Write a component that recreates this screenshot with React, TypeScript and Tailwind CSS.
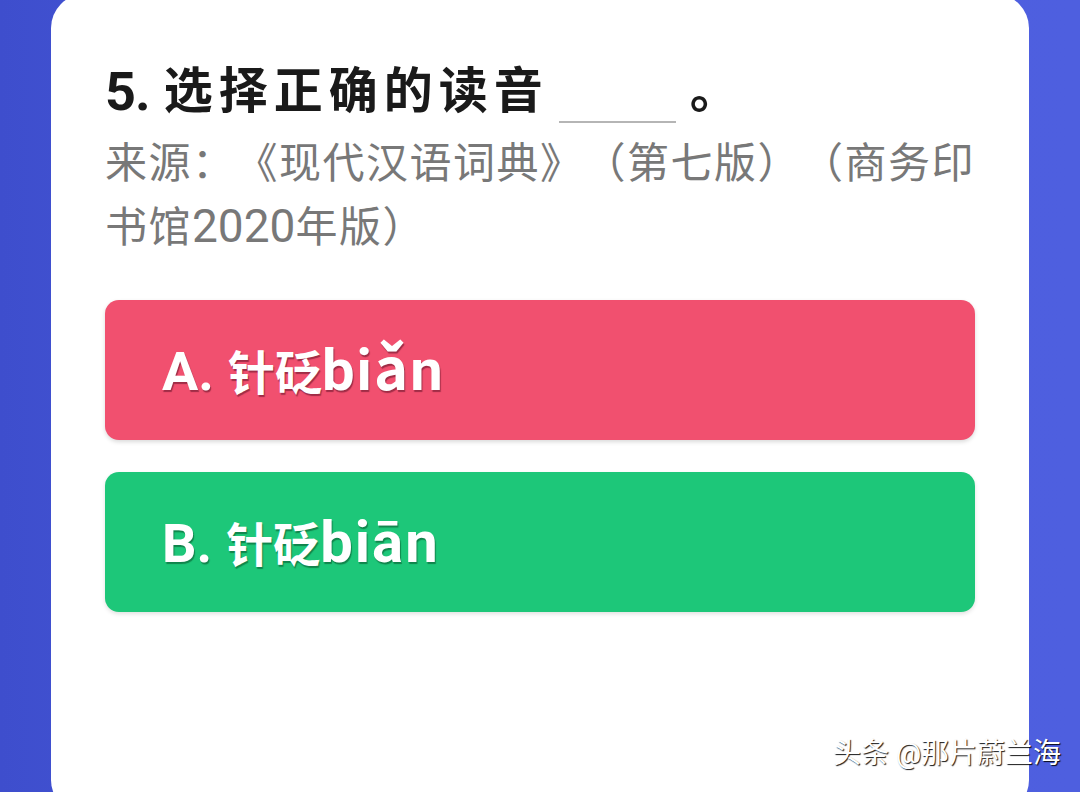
import React from "react";

const cjk = { fontFamily: 'Roboto, "Noto Sans CJK SC", "Noto Sans", sans-serif' };

function Cell({ ch, align }: { ch: string; align: "left" | "right" | "center" }) {
  const cls =
    align === "left"
      ? "inline-block w-[43.5px] text-left"
      : align === "right"
      ? "inline-block w-[43.5px] text-right"
      : "inline-block w-[43.5px] text-center";
  return <span className={cls}>{ch}</span>;
}

export default function App() {
  return (
    <div className="w-[1080px] h-[792px] overflow-hidden bg-gradient-to-r from-[#3e4ecd] via-[#4c5ee1] to-[#4e5fdf] relative" style={cjk}>
      <div className="mx-[51px] mt-[-6px] h-[820px] bg-white rounded-[34px] px-[54px] pt-[65px]">
        <div className="flex items-end font-bold text-[#1a1a1a] leading-[66px]">
          <span className="text-[54px] tracking-[-1px]">5.</span>
          <span className="text-[49px] tracking-[6px] ml-[14px]">选择正确的读音</span>
          <span className="w-[117px] h-[2px] bg-[#b5b5b5] mb-[2px] ml-[10px]" />
          <span className="text-[49px] ml-[14px]">。</span>
        </div>
        <div className="mt-[8px] text-[42px] text-[#787878] leading-[62px]">
          <div className="whitespace-nowrap tracking-[1.5px]">
            来源<Cell ch="：" align="left" />
            <Cell ch="《" align="right" />
            现代汉语词典
            <Cell ch="》" align="left" />
            <Cell ch="（" align="right" />
            第七版
            <Cell ch="）" align="left" />
            <Cell ch="（" align="right" />
            商务印
          </div>
          <div className="whitespace-nowrap tracking-[1.5px]">
            书馆<span className="text-[46px] tracking-[0px]">2020</span>年版<Cell ch="）" align="left" />
          </div>
        </div>
        <div className="mt-[41px] flex flex-col gap-[32px]">
          <div className="h-[140px] rounded-[14px] bg-[#f1506f] shadow-[0_2px_4px_rgba(0,0,0,0.15)] flex items-center pl-[57px]">
            <span className="text-white font-bold [text-shadow:1px_2px_1px_rgba(60,0,20,0.45)] whitespace-nowrap">
              <span className="text-[54px]">A.</span>
              <span className="text-[47px] ml-[14px]">针砭</span>
              <span className="text-[58px] tracking-[2px]">biǎn</span>
            </span>
          </div>
          <div className="h-[140px] rounded-[14px] bg-[#1dc779] shadow-[0_2px_4px_rgba(0,0,0,0.12)] flex items-center pl-[57px]">
            <span className="text-white font-bold [text-shadow:1px_2px_1px_rgba(0,50,20,0.45)] whitespace-nowrap">
              <span className="text-[54px]">B.</span>
              <span className="text-[47px] ml-[14px]">针砭</span>
              <span className="text-[58px] tracking-[2px]">biān</span>
            </span>
          </div>
        </div>
      </div>
      <div className="absolute left-[833px] top-[736px] text-[28px] text-white leading-[36px] whitespace-nowrap [text-shadow:1px_1px_1px_rgba(0,0,0,0.9)]">
        头条 @那片蔚兰海
      </div>
    </div>
  );
}
